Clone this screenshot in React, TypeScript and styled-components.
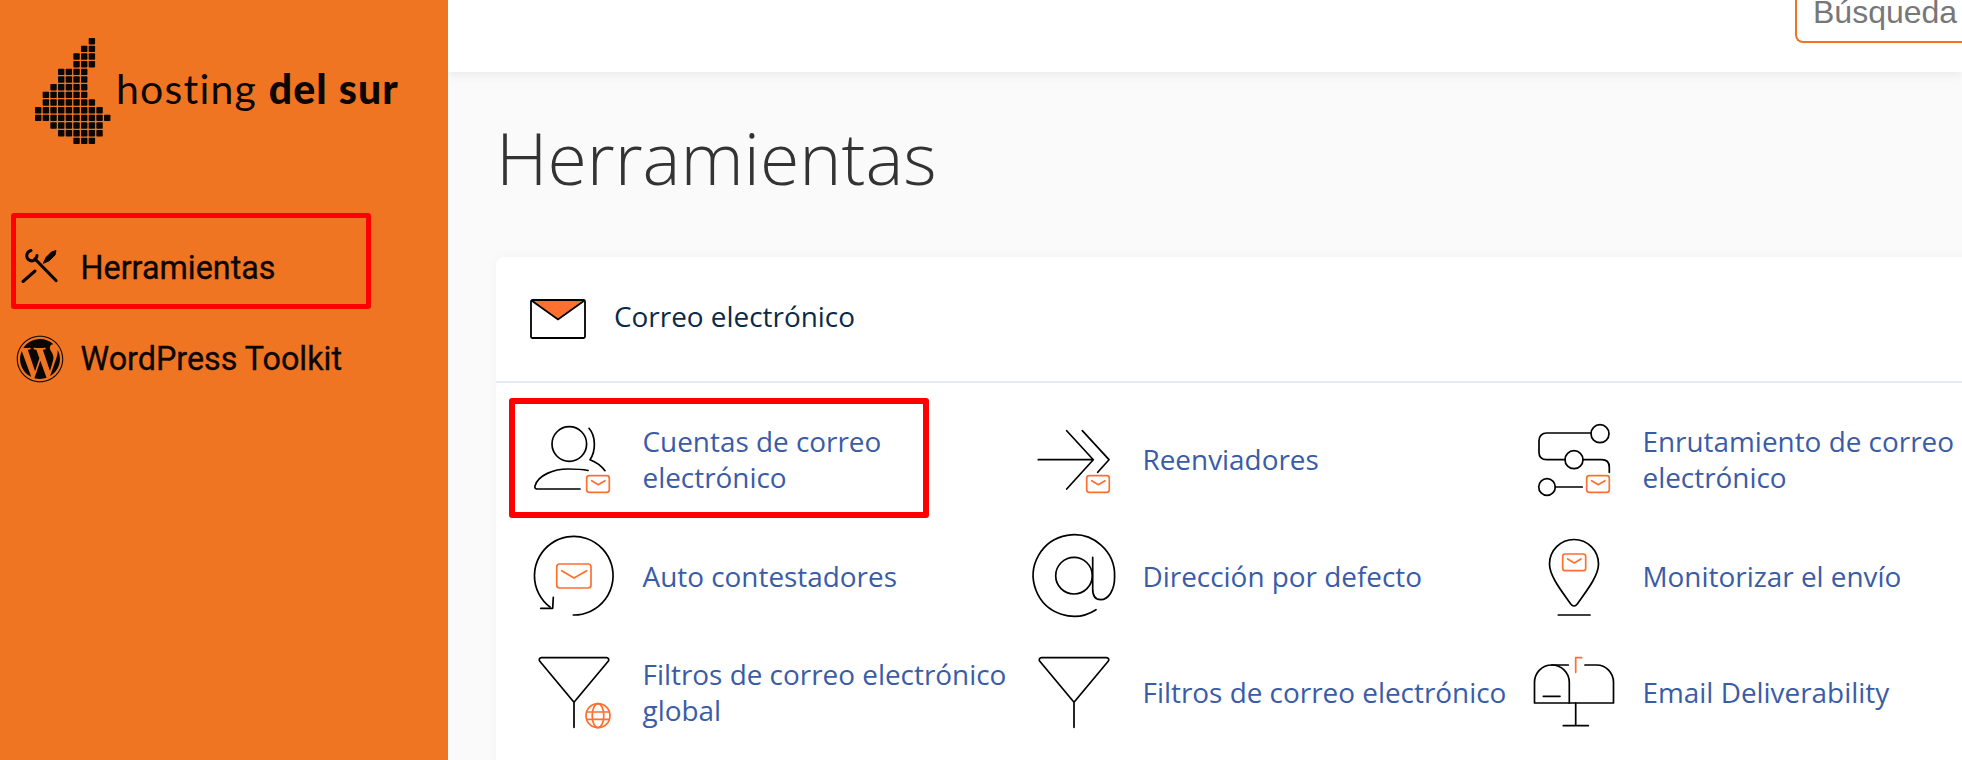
import React from 'react'
import styled, { createGlobalStyle } from 'styled-components'
import { FaWordpress } from 'react-icons/fa'

const GlobalStyle = createGlobalStyle`
  html, body {
    margin: 0;
    padding: 0;
    height: 100%;
    overflow: hidden;
    background: #fafafa;
    font-family: "Open Sans", "Liberation Sans", sans-serif;
  }
`

const Page = styled.div`
  display: flex;
  width: 1962px;
  height: 760px;
  overflow: hidden;
`

const Sidebar = styled.aside`
  position: relative;
  z-index: 2;
  flex: 0 0 448px;
  background: #f07522;
`

const Logo = styled.div`
  display: flex;
  padding: 38px 0 0 35px;
  height: 146px;
`

const Wordmark = styled.div`
  margin: 26px 0 0 4px;
  font-family: Lato, "Liberation Sans", sans-serif;
  font-size: 41px;
  line-height: 50px;
  font-weight: 400;
  letter-spacing: 1.2px;
  color: #0b0705;
  white-space: nowrap;
  strong {
    font-weight: 900;
    letter-spacing: 1.1px;
  }
`

const Nav = styled.nav`
  margin-top: 38.5px;
`

const NavItem = styled.a`
  position: relative;
  display: flex;
  align-items: center;
  gap: 15.5px;
  height: 91px;
  padding-left: 15px;
  font-family: Roboto, "Liberation Sans", sans-serif;
  font-size: 32.3px;
  font-weight: 400;
  -webkit-text-stroke: 0.35px #0b0705;
  color: #0b0705;
`

const NavIcon = styled.span`
  display: flex;
  align-items: center;
  justify-content: center;
  width: 50px;
  height: 50px;
`

const NavMarker = styled.span`
  position: absolute;
  left: 11px;
  top: -10px;
  width: 360px;
  height: 96px;
  box-sizing: border-box;
  border: 5px solid #ff0000;
  border-radius: 3px;
`

const Main = styled.main`
  flex: 1;
  min-width: 0;
  display: flex;
  flex-direction: column;
`

const TopBar = styled.header`
  flex: 0 0 72px;
  height: 72px;
  display: flex;
  justify-content: flex-end;
  align-items: flex-end;
  padding-bottom: 29px;
  box-sizing: border-box;
  background: #fff;
  box-shadow: 0 2px 10px rgba(0, 0, 0, 0.08);
`

const SearchBox = styled.div`
  box-sizing: border-box;
  flex: 0 0 167px;
  height: 60px;
  padding: 7px 0 0 16px;
  border: 2px solid #f07522;
  border-right: 0;
  border-radius: 8px 0 0 8px;
  font-family: "Liberation Sans", Arial, sans-serif;
  font-size: 32px;
  line-height: 40px;
  color: #777;
  white-space: nowrap;
  overflow: hidden;
`

const Content = styled.div`
  flex: 1;
  padding-left: 48px;
`

const Title = styled.h1`
  margin: 45px 0 0 0;
  font-size: 71.6px;
  line-height: 80px;
  font-weight: 300;
  color: #333;
`

const Card = styled.section`
  margin-top: 60px;
  width: 1600px;
  min-height: 600px;
  background: #fff;
  border-radius: 8px;
  box-shadow: 0 0 12px rgba(0, 0, 0, 0.03);
`

const CardHeader = styled.div`
  display: flex;
  align-items: center;
  gap: 28px;
  height: 124px;
  padding-left: 34px;
  border-bottom: 2px solid #e6ebf3;
  font-size: 27.9px;
  color: #0b2a47;
`

const HeaderLabel = styled.span`
  padding-bottom: 6px;
`

const Tools = styled.div`
  display: grid;
  grid-template-columns: repeat(3, 500px);
  grid-auto-rows: 116.5px;
  padding: 18px 0 0 13px;
`

const Tool = styled.a`
  position: relative;
  display: flex;
  align-items: center;
  gap: 28.5px;
  padding-left: 25px;
  font-size: 27.9px;
  line-height: 36px;
  color: #3a5ca6;
`

const ToolLabel = styled.span`
  max-width: 375px;
`

const ToolMarker = styled.span`
  position: absolute;
  left: 0;
  top: -3px;
  width: 420px;
  height: 120px;
  box-sizing: border-box;
  border: 6px solid #ff0000;
  border-radius: 3px;
`

const IconSvg = styled.svg`
  flex: 0 0 80px;
  width: 80px;
  height: 80px;
  overflow: visible;
  fill: none;
  stroke: #000;
  stroke-width: 1.7;
  stroke-linecap: round;
  stroke-linejoin: round;
  .o {
    stroke: #fd7030;
  }
`

const Mini = () => (
  <g className="o">
    <rect x="52.7" y="56.7" width="22.6" height="16.6" rx="2.5" />
    <path d="M57.7 61.7l6.6 4 6.7-4" />
  </g>
)

const LOGO_ROWS = [
  [7, 7],
  [6, 7],
  [5, 7],
  [5, 7],
  [3, 6],
  [3, 6],
  [2, 6],
  [1, 6],
  [1, 7],
  [0, 8],
  [0, 9],
  [2, 8],
  [3, 8],
  [5, 7],
]

const LogoMark = () => (
  <svg width="77" height="108" viewBox="0 0 77 108">
    {LOGO_ROWS.flatMap(([from, to], row) =>
      Array.from({ length: to - from + 1 }, (_, i) => (
        <rect
          key={`${row}-${i}`}
          x={(from + i) * 7.67}
          y={row * 7.67}
          width="6.4"
          height="6.4"
          rx="0.8"
          fill="#0b0705"
        />
      )),
    )}
  </svg>
)

const ToolsIcon = () => (
  <svg width="50" height="50" viewBox="0 3 50 50" fill="none" stroke="#0b0705" strokeLinecap="round">
    <path d="M20 19L41 40.500" strokeWidth="3.200" />
    <path d="M16 10.500C11.500 11.500 10.500 17 13.500 19.500C17 22.500 21.500 20 22 15.500" strokeWidth="3" />
    <path d="M28.500 23L31 17.500 36.500 12 41 10.500 40 15 34.500 20.500z" fill="#0b0705" strokeWidth="1" />
    <path d="M20 31L8 41.500" strokeWidth="3" />
  </svg>
)

const MailHeaderIcon = () => (
  <svg width="56" height="40" viewBox="0 0 56 40">
    <path d="M1 1h54L28 20.500z" fill="#fd7030" />
    <rect x="1" y="1" width="54" height="38" rx="1.500" fill="none" stroke="#000" strokeWidth="1.800" />
    <path d="M1.500 1.500L28 20.500 54.500 1.500" fill="none" stroke="#000" strokeWidth="1.800" />
  </svg>
)

const AccountsIcon = () => (
  <IconSvg viewBox="0 0 80 80">
    <circle cx="35.300" cy="25" r="17.300" />
    <path d="M55 9.300c7 8 7 23 1 31.400Q65 44 71 51.700" />
    <path d="M54 51.500c-5-1-12-1.500-20-1.500-14 0-30 6-33 17-.5 2 .5 3 2 3h43" />
    <Mini />
  </IconSvg>
)

const ForwardersIcon = () => (
  <IconSvg viewBox="0 0 80 80">
    <path d="M4.300 40.700h55M32.700 11.700l26.600 29L32.700 70M48.300 11.700L75 40.700 63.700 53.300" />
    <Mini />
  </IconSvg>
)

const RoutingIcon = () => (
  <IconSvg viewBox="0 0 80 80">
    <circle cx="66" cy="14.700" r="9" />
    <path d="M56.500 14H12.700C8 14 5 17 5 21.700v11.600c0 4.700 3 7.400 7.700 7.400H31" />
    <circle cx="40" cy="40.700" r="9" />
    <path d="M49.300 40.700h18.400c5 0 7.600 3 7.600 7.600v5" />
    <circle cx="13" cy="68" r="8.300" />
    <path d="M21.300 68h27" />
    <Mini />
  </IconSvg>
)

const AutoresponderIcon = () => (
  <IconSvg viewBox="0 0 80 80">
    <path d="M39.300 79A39.300 39.300 0 1 0 16 71" />
    <path d="M19.300 61.300l-.6 11h-12" />
    <g className="o">
      <rect x="22.700" y="28" width="34.300" height="24" rx="3" />
      <path d="M27.700 34.700L40 42l12.700-7.300" />
    </g>
  </IconSvg>
)

const AtIcon = () => (
  <IconSvg viewBox="0 0 80 80">
    <circle cx="40" cy="39.700" r="18.300" />
    <path d="M62 73.700A40.700 40.700 0 1 1 80.600 41c0 13-6 22.700-14 22.700-5 0-7.900-4-7.900-10.700V21.300" />
  </IconSvg>
)

const PinIcon = () => (
  <IconSvg viewBox="0 0 80 80">
    <path d="M40 70c-1.500 0-2.500-1-3.500-2.300C30 58 15.500 41 15.500 28a24.500 24.500 0 0 1 49 0c0 13-14.500 30-21 39.700-1 1.300-2 2.300-3.500 2.300z" />
    <path d="M24.300 79H56" />
    <g className="o">
      <rect x="28.700" y="18" width="23" height="16.700" rx="2.500" />
      <path d="M33.700 23l6.600 4 6.700-4" />
    </g>
  </IconSvg>
)

const Funnel = () => (
  <path d="M7.500 5.700h65c2 0 3 2 1.700 3.500L40 50.300 5.800 9.200C4.500 7.700 5.500 5.700 7.500 5.700zM40 50.300v25" />
)

const GlobalFilterIcon = () => (
  <IconSvg viewBox="0 0 80 80">
    <Funnel />
    <g className="o">
      <circle cx="64" cy="63.700" r="12" />
      <ellipse cx="64" cy="63.700" rx="5.800" ry="12" />
      <path d="M53.500 60h21M53.500 67.400h21" />
    </g>
  </IconSvg>
)

const FilterIcon = () => (
  <IconSvg viewBox="0 0 80 80">
    <Funnel />
  </IconSvg>
)

const MailboxIcon = () => (
  <IconSvg viewBox="0 0 80 80">
    <path d="M34.300 13H17.700C8 13 .500 21 .500 30.300V51h79V30.300C79.500 21 72 13 62.700 13H51" />
    <path d="M17.700 13c10 0 17.600 8 17.600 17.300V51M41.700 51v22.700M29.300 73.700h25M9.300 44.300H26" />
    <path className="o" d="M41.700 20.300V5.700h6" />
  </IconSvg>
)

const TOOLS = [
  { label: 'Cuentas de correo electrónico', Icon: AccountsIcon, marked: true },
  { label: 'Reenviadores', Icon: ForwardersIcon },
  { label: 'Enrutamiento de correo electrónico', Icon: RoutingIcon },
  { label: 'Auto contestadores', Icon: AutoresponderIcon },
  { label: 'Dirección por defecto', Icon: AtIcon },
  { label: 'Monitorizar el envío', Icon: PinIcon },
  { label: 'Filtros de correo electrónico global', Icon: GlobalFilterIcon },
  { label: 'Filtros de correo electrónico', Icon: FilterIcon },
  { label: 'Email Deliverability', Icon: MailboxIcon },
]

export default function App(): React.JSX.Element {
  return (
    <Page>
      <GlobalStyle />
      <Sidebar>
        <Logo>
          <LogoMark />
          <Wordmark>
            hosting <strong>del sur</strong>
          </Wordmark>
        </Logo>
        <Nav>
          <NavItem>
            <NavMarker />
            <NavIcon>
              <ToolsIcon />
            </NavIcon>
            Herramientas
          </NavItem>
          <NavItem>
            <NavIcon>
              <FaWordpress size={48} />
            </NavIcon>
            WordPress Toolkit
          </NavItem>
        </Nav>
      </Sidebar>
      <Main>
        <TopBar>
          <SearchBox>Búsqueda</SearchBox>
        </TopBar>
        <Content>
          <Title>Herramientas</Title>
          <Card>
            <CardHeader>
              <MailHeaderIcon />
              <HeaderLabel>Correo electrónico</HeaderLabel>
            </CardHeader>
            <Tools>
              {TOOLS.map(({ label, Icon, marked }) => (
                <Tool key={label}>
                  {marked && <ToolMarker />}
                  <Icon />
                  <ToolLabel>{label}</ToolLabel>
                </Tool>
              ))}
            </Tools>
          </Card>
        </Content>
      </Main>
    </Page>
  )
}
